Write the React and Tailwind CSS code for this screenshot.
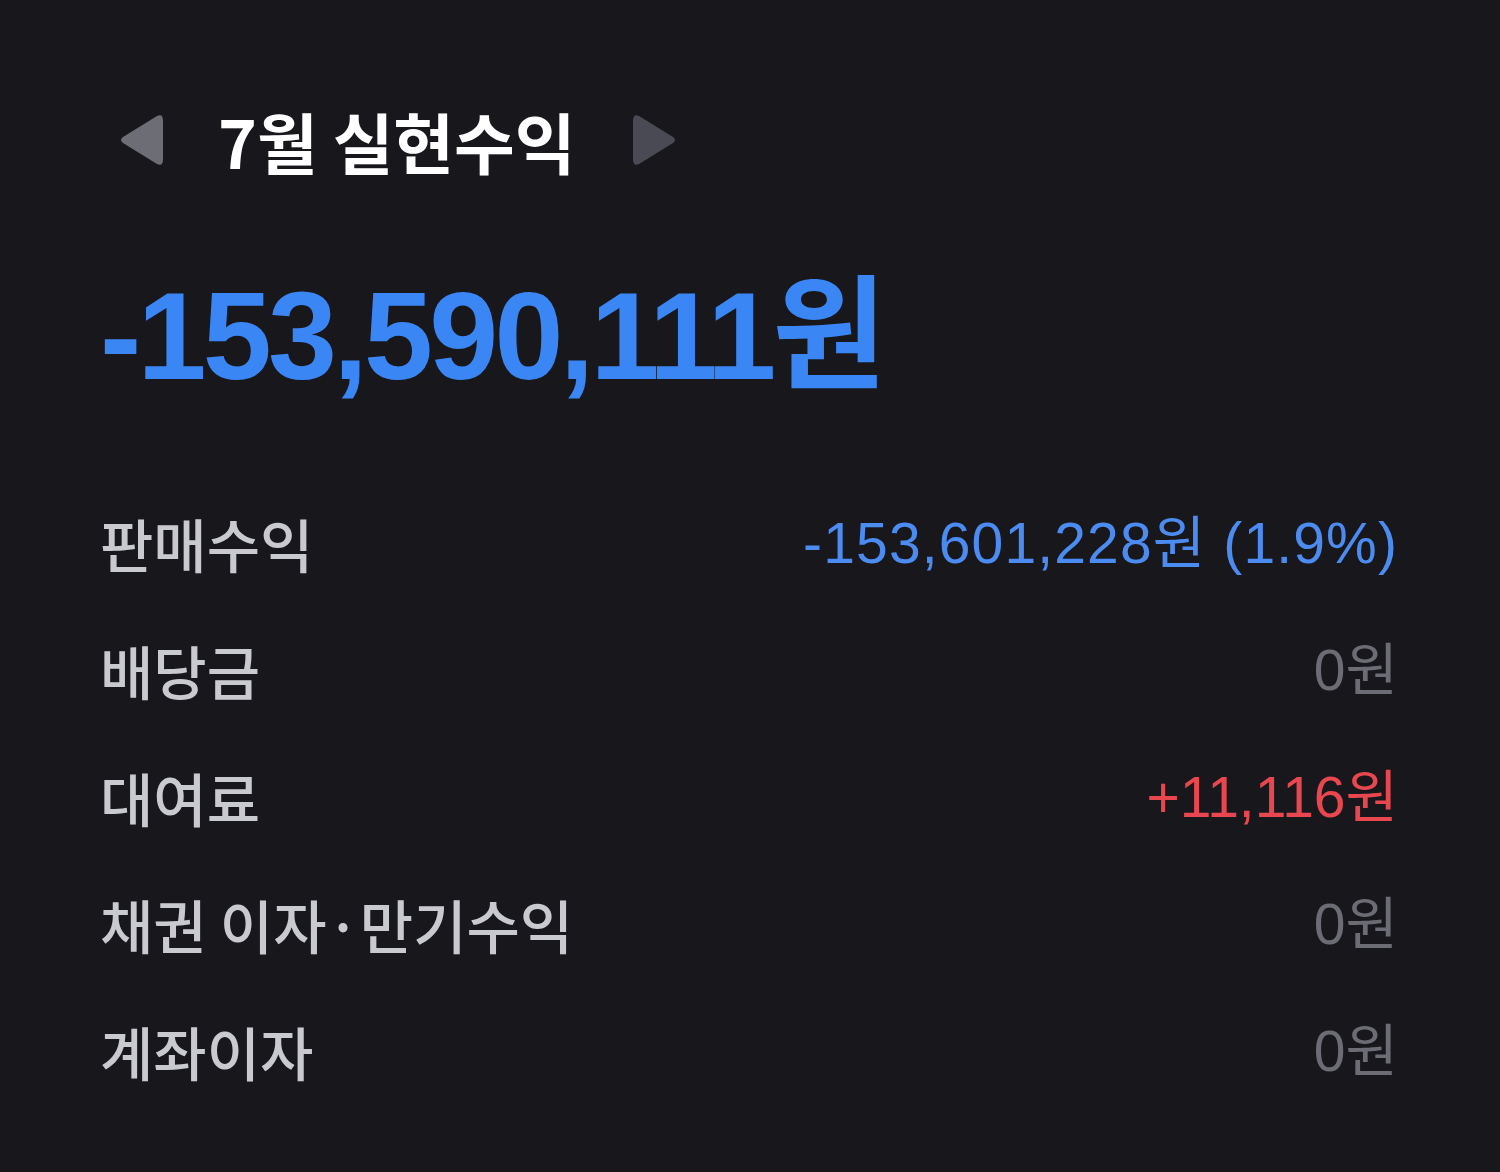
import React from 'react';

const rows = [
  { label: '판매수익', value: '-153,601,228원 (1.9%)', tone: 'text-[#4c8bf0] tracking-[0.02em]' },
  { label: '배당금', value: '0원', tone: 'text-[#6c6c74]' },
  { label: '대여료', value: '+11,116원', tone: 'text-[#e8474f]' },
  { label: '채권 이자·만기수익', value: '0원', tone: 'text-[#6c6c74]' },
  { label: '계좌이자', value: '0원', tone: 'text-[#6c6c74]' },
];

const numFont = { fontFamily: '"Liberation Sans", "Noto Sans CJK KR", sans-serif' };

const Triangle = ({ dir, color }) => (
  <svg width="46" height="58" viewBox="0 0 46 58">
    {dir === 'left' ? (
      <path d="M39 5 Q45 2 45 10 L45 48 Q45 56 39 53 L5 32 Q1 29 5 26 Z" fill={color} />
    ) : (
      <path d="M7 5 Q1 2 1 10 L1 48 Q1 56 7 53 L41 32 Q45 29 41 26 Z" fill={color} />
    )}
  </svg>
);

export default function App() {
  return (
    <div
      className="w-[1500px] h-[1172px] bg-[#17171c] overflow-hidden"
      style={{ fontFamily: '"Noto Sans CJK KR", "Noto Sans", sans-serif' }}
    >
      {/* Month selector */}
      <div className="flex items-center pl-[118px] pt-[94px] h-[186px]">
        <Triangle dir="left" color="#6d6d75" />
        <h1 className="ml-[54px] text-[66px] leading-none font-bold text-white">
          7월 실현수익
        </h1>
        <div className="ml-[56px]">
          <Triangle dir="right" color="#4a4a55" />
        </div>
      </div>

      {/* Total */}
      <div
        className="pl-[100px] mt-[88px] text-[124px] leading-none font-bold text-[#3b86f5] tracking-[-0.03em]"
        style={numFont}
      >
        -153,590,111원
      </div>

      {/* Breakdown */}
      <div className="mt-[82px] pl-[100px] pr-[102px] flex flex-col">
        {rows.map((r) => (
          <div key={r.label} className="flex items-center justify-between h-[127px]">
            <span className="text-[58px] font-medium text-[#c9c9d0]">{r.label}</span>
            <span className={`text-[57px] ${r.tone}`} style={numFont}>
              {r.value}
            </span>
          </div>
        ))}
      </div>
    </div>
  );
}
